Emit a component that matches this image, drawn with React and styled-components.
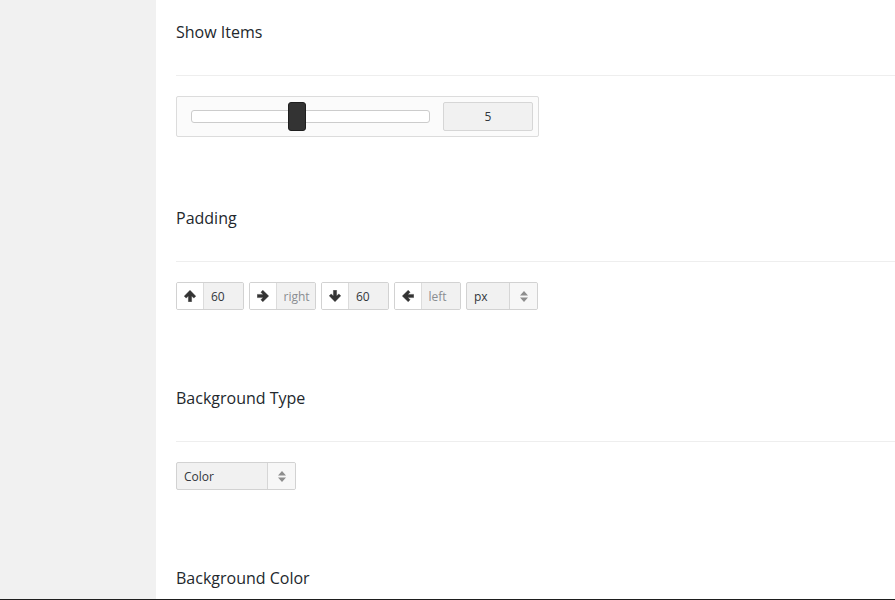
import React from 'react';
import styled, { createGlobalStyle } from 'styled-components';

const GlobalStyle = createGlobalStyle`
  html, body {
    margin: 0;
    padding: 0;
    background: #fff;
  }
  body {
    font-family: "Open Sans", "Noto Sans", "Liberation Sans", sans-serif;
    color: #23282d;
  }
  * { box-sizing: border-box; }
`;

const Screen = styled.div`
  display: flex;
  height: 600px;
  overflow: hidden;
  border-bottom: 1px solid #1e1e1e;
`;

const Sidebar = styled.aside`
  width: 156px;
  flex-shrink: 0;
  background-color: #f1f1f1;
`;

const Content = styled.main`
  flex: 1;
  padding-left: 20px;
  overflow: hidden;
`;

const FieldHeader = styled.div`
  height: 76px;
  padding-top: 21px;
  border-bottom: 1px solid #eeeeee;
`;

const FieldTitle = styled.h3`
  margin: 0;
  font-size: 16px;
  font-weight: 400;
  line-height: 22px;
  color: #23282d;
`;

const FieldBody = styled.div`
  height: ${props => props.$height}px;
  padding-top: 20px;
`;

// slider
const SliderBox = styled.div`
  display: flex;
  align-items: center;
  width: 363px;
  height: 41px;
  padding: 0 5px 0 14px;
  background-color: #fbfbfb;
  border: 1px solid #dcdcdc;
  border-radius: 2px;
`;

const Track = styled.div`
  position: relative;
  width: 239px;
  height: 13px;
  background: #fff;
  border: 1px solid #cccccc;
  border-radius: 3px;
`;

const Handle = styled.span`
  position: absolute;
  top: -9px;
  width: 18px;
  height: 29px;
  background-color: #333;
  border: 1px solid #1f1f1f;
  border-radius: 3px;
`;

const ValueBox = styled.div`
  margin-left: auto;
  width: 90px;
  height: 29px;
  display: flex;
  align-items: center;
  justify-content: center;
  background-color: #f1f1f1;
  border: 1px solid #d6d6d6;
  border-radius: 2px;
  font-size: 12px;
  color: #32373c;
`;

// padding inputs
const InputRow = styled.div`
  display: flex;
  gap: 5px;
`;

const InputGroup = styled.div`
  display: flex;
  width: 67.5px;
  height: 28px;
  border: 1px solid #d2d2d2;
  border-radius: 2px;
  overflow: hidden;
`;

const IconCell = styled.span`
  display: flex;
  align-items: center;
  justify-content: center;
  width: 27px;
  flex-shrink: 0;
  background: #fff;
  border-right: 1px solid #dcdcdc;
`;

const ValueCell = styled.span`
  flex: 1;
  display: flex;
  align-items: center;
  padding-left: 7px;
  background-color: #f1f1f1;
  font-size: 12px;
  color: ${props => (props.$placeholder ? '#8a8d91' : '#32373c')};
`;

const Select = styled.div`
  display: flex;
  width: ${props => props.$width}px;
  height: 28px;
  border: 1px solid #d2d2d2;
  border-radius: 2px;
  background-color: #f1f1f1;
  overflow: hidden;
`;

const SelectLabel = styled.span`
  flex: 1;
  display: flex;
  align-items: center;
  padding-left: 7px;
  font-size: 12px;
  color: #32373c;
`;

const SelectArrows = styled.span`
  width: 28px;
  display: flex;
  align-items: center;
  justify-content: center;
  border-left: 1px solid #d6d6d6;
  background: #f7f7f7;
`;

// chunky arrow pointing up, rotated for the other sides
const Arrow = ({ rotate }) => (
  <svg width="12" height="12" viewBox="0 0 12 12" style={{ transform: `rotate(${rotate}deg)` }}>
    <path
      d="M6 0.3 L11.8 6.2 L9.8 8.1 L7.6 5.9 V11.7 H4.4 V5.9 L2.2 8.1 L0.2 6.2 Z"
      fill="#333"
      stroke="#333"
      strokeWidth="0.4"
      strokeLinejoin="round"
    />
  </svg>
);

const SortIcon = () => (
  <svg width="8" height="11" viewBox="0 0 8 11">
    <path d="M4 0 L8 4.5 H0 Z M0 6.5 H8 L4 11 Z" fill="#8e8e8e" />
  </svg>
);

const Field = ({ title, height, children }) => (
  <section>
    <FieldHeader>
      <FieldTitle>{title}</FieldTitle>
    </FieldHeader>
    {children && <FieldBody $height={height}>{children}</FieldBody>}
  </section>
);

const paddings = [
  { rotate: 0, value: '60' },
  { rotate: 90, value: 'right', placeholder: true },
  { rotate: 180, value: '60' },
  { rotate: 270, value: 'left', placeholder: true },
];

const App = () => {
  const sliderValue = 5;
  const sliderPos = 96;

  return (
    <>
      <GlobalStyle />
      <Screen>
        <Sidebar />
        <Content>
          <Field title="Show Items" height={110}>
            <SliderBox>
              <Track>
                <Handle style={{ left: sliderPos }} />
              </Track>
              <ValueBox>{sliderValue}</ValueBox>
            </SliderBox>
          </Field>

          <Field title="Padding" height={104}>
            <InputRow>
              {paddings.map((p, i) => (
                <InputGroup key={i}>
                  <IconCell><Arrow rotate={p.rotate} /></IconCell>
                  <ValueCell $placeholder={p.placeholder}>{p.value}</ValueCell>
                </InputGroup>
              ))}
              <Select $width={72}>
                <SelectLabel>px</SelectLabel>
                <SelectArrows><SortIcon /></SelectArrows>
              </Select>
            </InputRow>
          </Field>

          <Field title="Background Type" height={104}>
            <Select $width={120}>
              <SelectLabel>Color</SelectLabel>
              <SelectArrows><SortIcon /></SelectArrows>
            </Select>
          </Field>

          <Field title="Background Color" height={104}>
            <div />
          </Field>
        </Content>
      </Screen>
    </>
  );
};

export default App;
